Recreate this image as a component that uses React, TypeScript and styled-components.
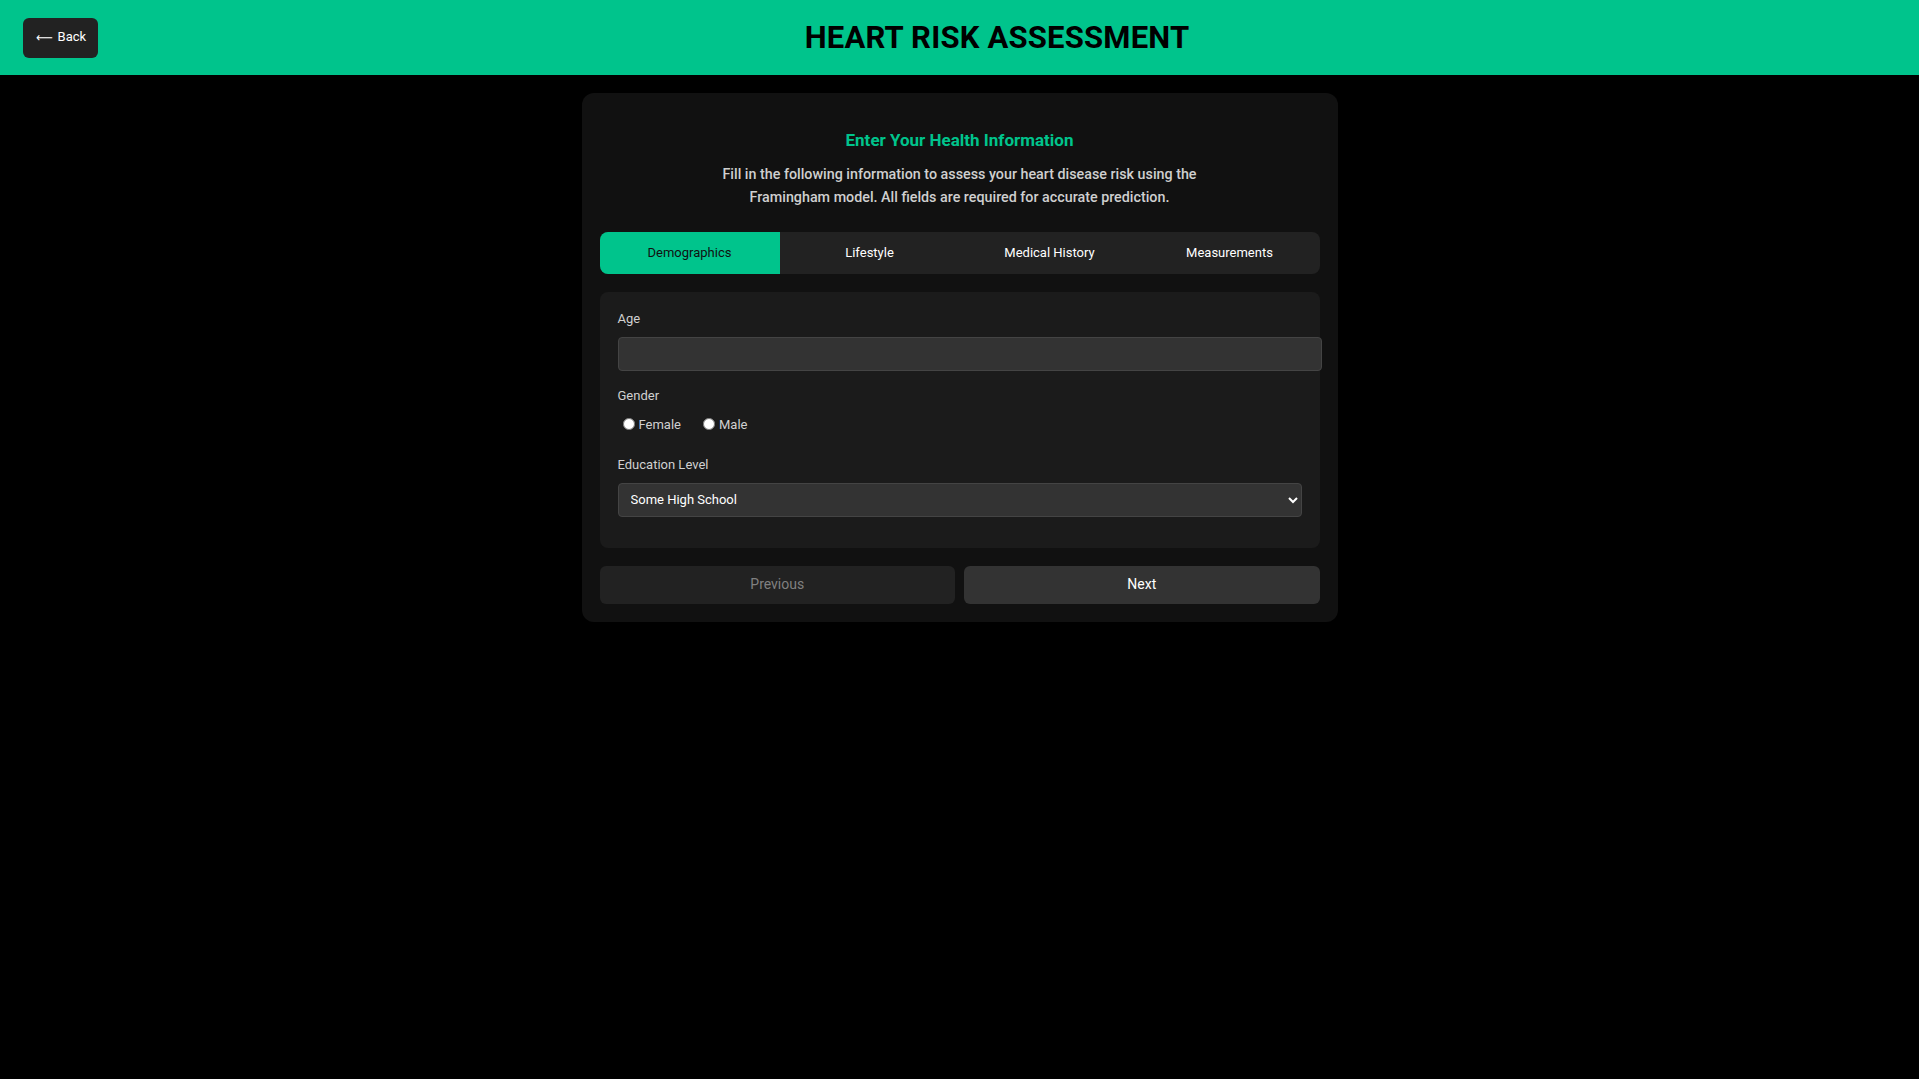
import React, { useState } from "react";
import styled, { createGlobalStyle } from "styled-components";

const GREEN = "#00c48c";

const GlobalStyle = createGlobalStyle`
  html, body {
    margin: 0;
    padding: 0;
    background: #000;
    font-family: Roboto, "Liberation Sans", Arial, sans-serif;
  }
  * { box-sizing: border-box; }
`;

const Page = styled.div`
  min-height: 100vh;
  background: #000;
`;

const Header = styled.header`
  height: 75px;
  background: ${GREEN};
  display: flex;
  align-items: center;
  padding: 0 23px;
`;

const BackButton = styled.button`
  height: 40px;
  width: 75px;
  background: #222;
  color: #fff;
  border: none;
  border-radius: 6px;
  font-family: Roboto, "Liberation Sans", sans-serif;
  font-size: 13px;
  font-weight: 400;
  cursor: pointer;
  padding: 0 0 2px;
  display: flex;
  align-items: center;
  justify-content: center;
  gap: 4px;
`;

const Arrow = styled.span`
  font-family: "DejaVu Sans", sans-serif;
  font-size: 13px;
  line-height: 1;
  display: inline-block;
  transform: scaleX(0.9) translateY(1px);
`;

const HeaderTitle = styled.h1`
  flex: 1;
  margin: 0;
  text-align: center;
  color: #000;
  font-size: 31px;
  font-weight: 700;
  letter-spacing: 0.2px;
`;

const Card = styled.main`
  width: 756px;
  margin: 18px auto 0;
  background: #111;
  border-radius: 12px;
  padding: 18px;
`;

const Intro = styled.section`
  text-align: center;
  padding-top: 19px;
`;

const CardTitle = styled.h2`
  margin: 0 0 13px;
  color: ${GREEN};
  font-size: 17px;
  line-height: 20px;
  font-weight: 700;
`;

const Description = styled.p`
  margin: 0 auto 23px;
  max-width: 500px;
  color: #cfcfcf;
  font-size: 14.3px;
  line-height: 23px;
  font-weight: 500;
`;

const Tabs = styled.nav`
  display: grid;
  grid-template-columns: repeat(4, 1fr);
  height: 42px;
  background: #222;
  border-radius: 8px;
  overflow: hidden;
  margin-bottom: 18px;
`;

const Tab = styled.button<{ $active?: boolean }>`
  border: none;
  background: ${(p) => (p.$active ? GREEN : "transparent")};
  color: ${(p) => (p.$active ? "#111" : "#fff")};
  font-family: Roboto, "Liberation Sans", sans-serif;
  font-size: 13px;
  font-weight: 400;
  padding: 0 0 2px;
  cursor: pointer;
`;

const Panel = styled.section`
  background: #1b1b1b;
  border-radius: 8px;
  padding: 18px;
  margin-bottom: 18px;
`;

const FieldGroup = styled.div`
  margin-bottom: 16px;
  &:last-child {
    margin-bottom: 13px;
  }
`;

const Label = styled.label`
  display: block;
  color: #d0d0d0;
  font-size: 13px;
  line-height: 18px;
  margin-bottom: 9px;
`;

const TextInput = styled.input`
  box-sizing: content-box;
  display: block;
  width: 100%;
  height: 32px;
  padding: 0 9px;
  background: #333;
  border: 1px solid #444;
  border-radius: 4px;
  color: #fff;
  font-family: Roboto, "Liberation Sans", sans-serif;
  font-size: 13px;
  outline: none;
`;

const RadioRow = styled.div`
  display: flex;
  align-items: center;
  height: 18px;
  margin-top: 10px;
  margin-bottom: 23px;
`;

const RadioLabel = styled.label`
  display: flex;
  align-items: center;
  color: #d0d0d0;
  font-size: 13px;
  margin-right: 17px;
  input {
    margin: 0 4px 0 5px;
    width: 12px;
    height: 12px;
  }
`;

const Select = styled.select`
  display: block;
  width: 100%;
  height: 34px;
  padding: 0 8px 2px;
  background: #333;
  border: 1px solid #444;
  border-radius: 4px;
  color: #fff;
  font-family: Roboto, "Liberation Sans", sans-serif;
  font-size: 13px;
  font-weight: 400;
  color-scheme: dark;
  outline: none;
`;

const NavRow = styled.div`
  display: grid;
  grid-template-columns: 1fr 1fr;
  gap: 9px;
`;

const NavButton = styled.button<{ $disabled?: boolean }>`
  height: 38px;
  border: none;
  border-radius: 6px;
  background: ${(p) => (p.$disabled ? "#222" : "#333")};
  color: ${(p) => (p.$disabled ? "#808080" : "#fff")};
  font-family: Roboto, "Liberation Sans", sans-serif;
  font-size: 14px;
  font-weight: 400;
  padding: 0 0 2px;
  cursor: ${(p) => (p.$disabled ? "default" : "pointer")};
`;

const tabs = ["Demographics", "Lifestyle", "Medical History", "Measurements"];

export default function App() {
  const [active, setActive] = useState(0);
  return (
    <Page>
      <GlobalStyle />
      <Header>
        <BackButton>
          <Arrow>⟵</Arrow>
          Back
        </BackButton>
        <HeaderTitle>HEART RISK ASSESSMENT</HeaderTitle>
      </Header>
      <Card>
        <Intro>
          <CardTitle>Enter Your Health Information</CardTitle>
          <Description>
            Fill in the following information to assess your heart disease risk using the
            Framingham model. All fields are required for accurate prediction.
          </Description>
        </Intro>
        <Tabs>
          {tabs.map((t, i) => (
            <Tab key={t} $active={i === active} onClick={() => setActive(i)}>
              {t}
            </Tab>
          ))}
        </Tabs>
        <Panel>
          <FieldGroup>
            <Label htmlFor="age">Age</Label>
            <TextInput id="age" type="number" />
          </FieldGroup>
          <FieldGroup>
            <Label>Gender</Label>
            <RadioRow>
              <RadioLabel>
                <input type="radio" name="gender" value="female" />
                Female
              </RadioLabel>
              <RadioLabel>
                <input type="radio" name="gender" value="male" />
                Male
              </RadioLabel>
            </RadioRow>
          </FieldGroup>
          <FieldGroup>
            <Label htmlFor="edu">Education Level</Label>
            <Select id="edu" defaultValue="1">
              <option value="1">Some High School</option>
              <option value="2">High School Diploma/GED</option>
              <option value="3">Some College/Vocational School</option>
              <option value="4">College Degree</option>
            </Select>
          </FieldGroup>
        </Panel>
        <NavRow>
          <NavButton $disabled disabled>
            Previous
          </NavButton>
          <NavButton>Next</NavButton>
        </NavRow>
      </Card>
    </Page>
  );
}
